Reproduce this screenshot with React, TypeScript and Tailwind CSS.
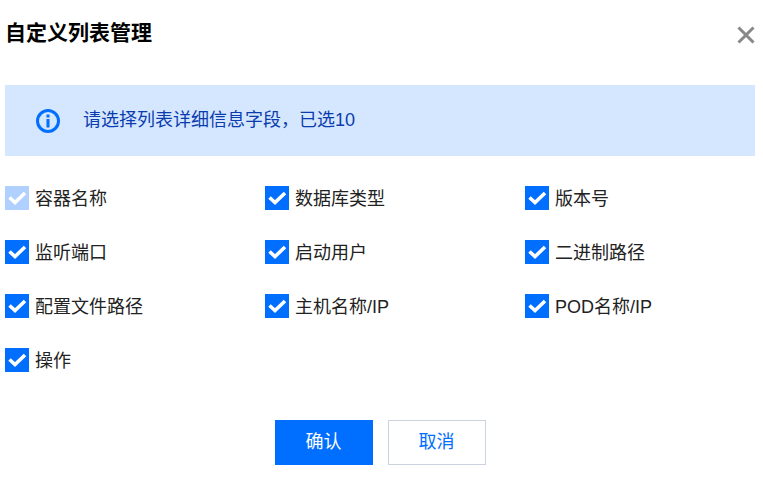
const fields = [
  { label: '容器名称', disabled: true },
  { label: '数据库类型' },
  { label: '版本号' },
  { label: '监听端口' },
  { label: '启动用户' },
  { label: '二进制路径' },
  { label: '配置文件路径' },
  { label: '主机名称/IP' },
  { label: 'POD名称/IP' },
  { label: '操作' },
];

function Check({ disabled }: { disabled?: boolean }) {
  return (
    <span className={`w-6 h-6 flex items-center justify-center ${disabled ? 'bg-[#b0d0ff]' : 'bg-[#006eff]'}`}>
      <svg width="24" height="24" viewBox="0 0 24 24" fill="none">
        <path d="M4.5 11.5 L10 16.5 L20 7" stroke="white" strokeWidth="3.6" />
      </svg>
    </span>
  );
}

function InfoIcon() {
  return (
    <svg width="24" height="24" viewBox="0 0 24 24" fill="none">
      <circle cx="12" cy="12" r="10.5" stroke="#006eff" strokeWidth="3" />
      <rect x="10.5" y="5.5" width="3" height="3" fill="#006eff" />
      <rect x="10.5" y="10" width="3" height="8.5" fill="#006eff" />
    </svg>
  );
}

export default function App() {
  return (
    <div className="w-[763px] h-[485px] bg-white overflow-hidden pl-[5px] pr-[8px] font-['Liberation_Sans','Noto_Sans_CJK_SC',sans-serif]">
      <div className="h-[85px] flex justify-between items-start pt-[19px]">
        <h1 className="text-[21px] leading-[27px] font-bold text-black">自定义列表管理</h1>
        <svg width="18" height="18" viewBox="0 0 18 18" fill="none" className="mt-[7px]">
          <path d="M1.5 1.5 L16.5 16.5 M16.5 1.5 L1.5 16.5" stroke="#888888" strokeWidth="3" />
        </svg>
      </div>

      <div className="h-[71px] bg-[#d5e7ff] flex items-center pl-[31px] gap-[23px]">
        <InfoIcon />
        <span className="text-[18px] text-[#0a3cb0]">请选择列表详细信息字段，已选10</span>
      </div>

      <div className="grid grid-cols-[260px_260px_1fr] gap-y-[30px] mt-[30px]">
        {fields.map((f) => (
          <label key={f.label} className="flex items-center gap-[6px] h-6 text-[18px] text-[#222222]">
            <Check disabled={f.disabled} />
            <span className="relative top-[1px]">{f.label}</span>
          </label>
        ))}
      </div>

      <div className="flex justify-center gap-[15px] mt-[48px]">
        <button className="w-[98px] h-[45px] bg-[#006eff] text-white text-[18px]">确认</button>
        <button className="w-[98px] h-[45px] bg-white border border-[#cbd2e0] text-[#006eff] text-[18px]">取消</button>
      </div>
    </div>
  );
}
